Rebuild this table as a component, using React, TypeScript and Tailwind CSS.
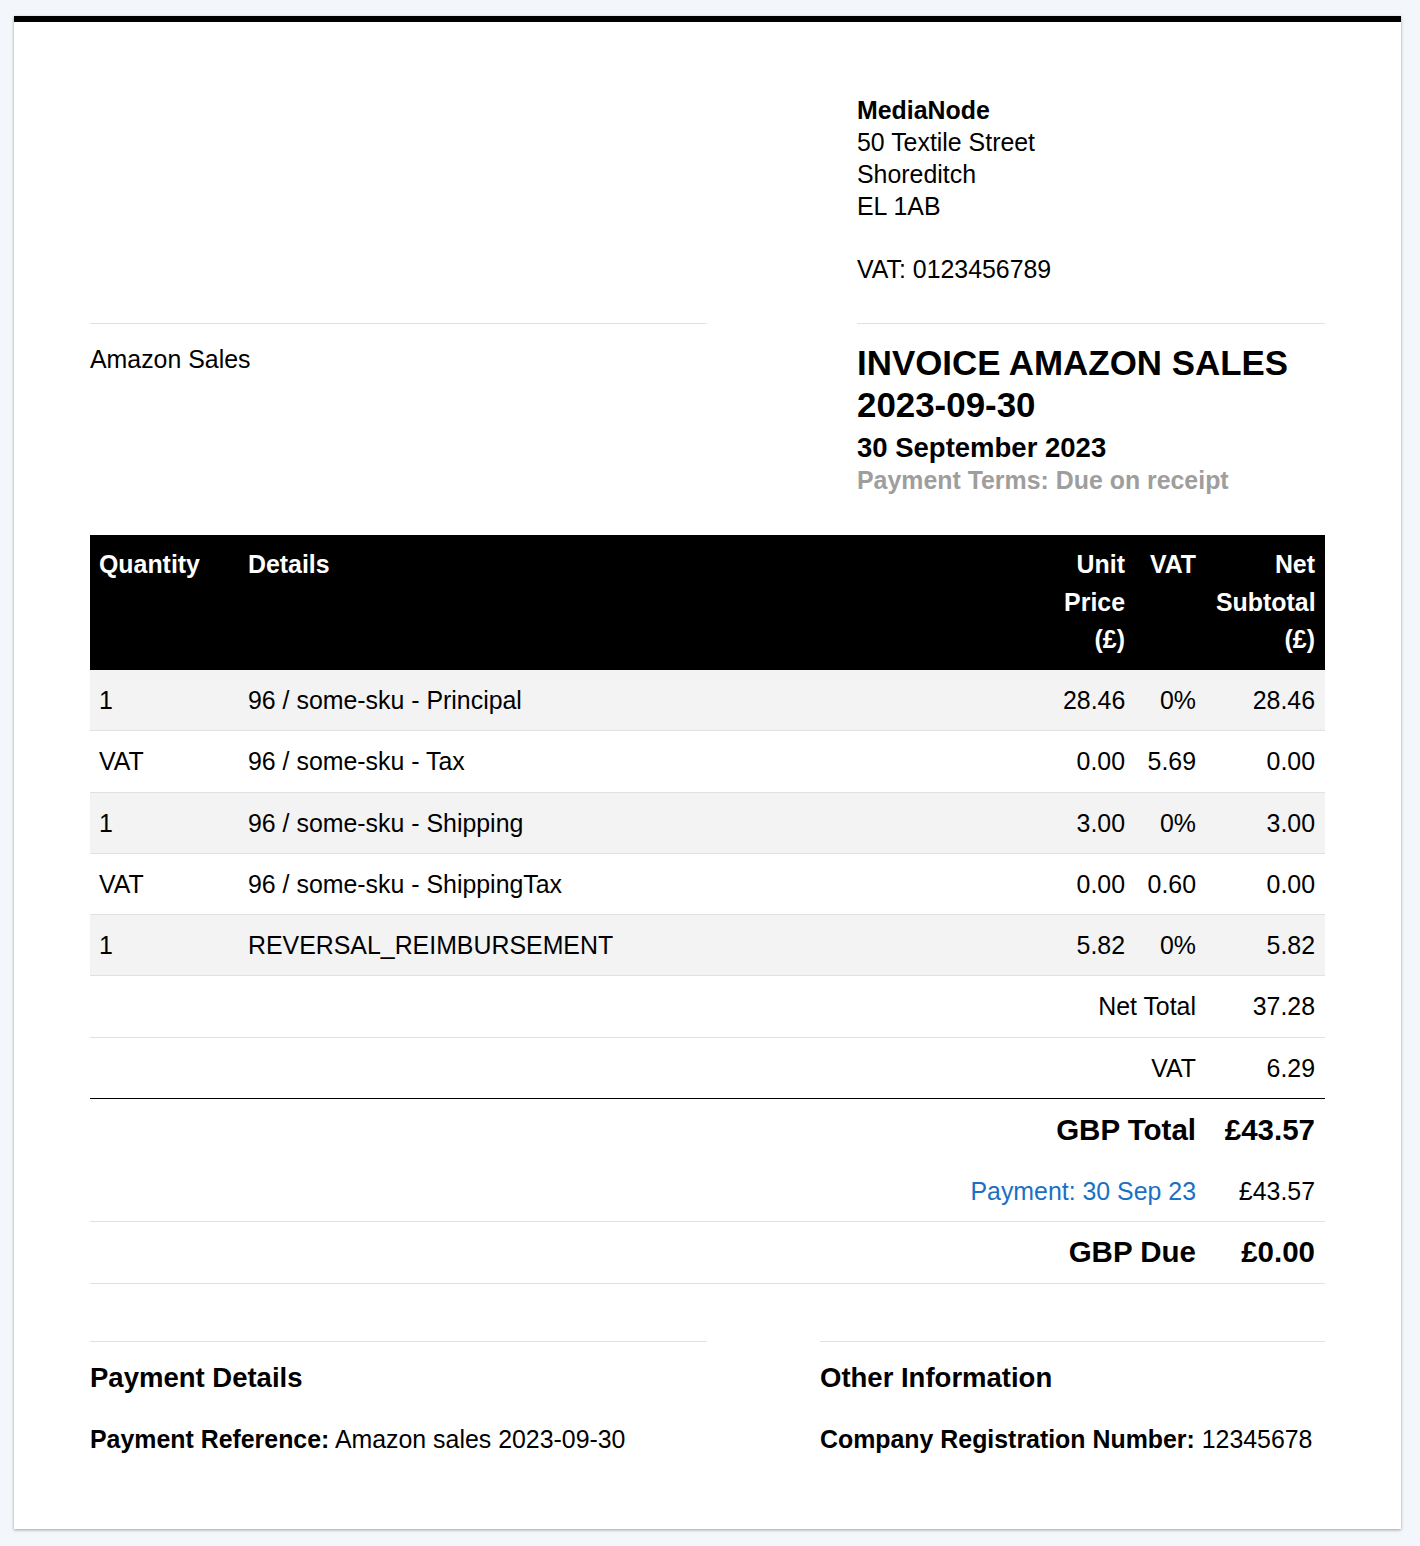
import React from "react";

const rows = [
  { q: "1", d: "96 / some-sku - Principal", u: "28.46", v: "0%", n: "28.46" },
  { q: "VAT", d: "96 / some-sku - Tax", u: "0.00", v: "5.69", n: "0.00" },
  { q: "1", d: "96 / some-sku - Shipping", u: "3.00", v: "0%", n: "3.00" },
  { q: "VAT", d: "96 / some-sku - ShippingTax", u: "0.00", v: "0.60", n: "0.00" },
  { q: "1", d: "REVERSAL_REIMBURSEMENT", u: "5.82", v: "0%", n: "5.82" },
];

const grid = "grid grid-cols-[149px_1fr_82px_71px_119px]";

export default function App() {
  return (
    <div
      className="min-h-[1546px] bg-[#f3f6fa] pt-4 pb-[17px] text-black"
      style={{ fontFamily: '"Liberation Sans", Arial, Helvetica, sans-serif' }}
    >
      <div className="ml-[14px] w-[1387px] border-t-[6px] border-black bg-white px-[76px] pt-[72px] pb-[74px] shadow-[0_1px_3px_rgba(0,0,0,0.35)] text-[24.9px]">
        {/* Company address */}
        <div className="flex">
          <div className="w-[617px]" />
          <div className="ml-auto w-[468px] leading-[32px]">
            <div className="font-bold">MediaNode</div>
            <div>50 Textile Street</div>
            <div>Shoreditch</div>
            <div>EL 1AB</div>
            <div className="mt-[31px]">VAT: 0123456789</div>
          </div>
        </div>

        {/* Bill to + invoice title */}
        <div className="mt-[38px] flex">
          <div className="w-[617px] border-t border-[#dee2e6] pt-[19px] leading-[32px]">
            Amazon Sales
          </div>
          <div className="ml-auto w-[468px] border-t border-[#dee2e6] pt-[18px]">
            <h1 className="text-[34.9px] font-bold leading-[42px]">
              INVOICE AMAZON SALES 2023-09-30
            </h1>
            <div className="mt-[5px] text-[27.5px] font-bold leading-[33px]">30 September 2023</div>
            <div className="text-[24.9px] font-bold leading-[32px] text-[#9e9e9e]">
              Payment Terms: Due on receipt
            </div>
          </div>
        </div>

        {/* Table */}
        <div className="mt-[39px]">
          <div className={`${grid} bg-black font-bold text-white leading-[37.5px]`}>
            <div className="pl-[9px] pr-[10px] pt-[11px] pb-[11.5px]">Quantity</div>
            <div className="pl-[9px] pr-[10px] pt-[11px] pb-[11.5px]">Details</div>
            <div className="px-[10px] pt-[11px] pb-[11.5px] text-right">
              Unit
              <br />
              Price
              <br />
              (£)
            </div>
            <div className="px-[10px] pt-[11px] pb-[11.5px] text-right">VAT</div>
            <div className="px-[10px] pt-[11px] pb-[11.5px] text-right">
              Net
              <br />
              Subtotal
              <br />
              (£)
            </div>
          </div>
          {rows.map((r, i) => (
            <div
              key={i}
              className={`${grid} border-b border-[#dee2e6] leading-[36.25px] ${
                i % 2 === 0 ? "bg-[#f3f3f3]" : "bg-white"
              }`}
            >
              <div className="py-3 pl-[9px] pr-[10px]">{r.q}</div>
              <div className="py-3 pl-[9px] pr-[10px]">{r.d}</div>
              <div className="py-3 px-[10px] text-right">{r.u}</div>
              <div className="py-3 px-[10px] text-right">{r.v}</div>
              <div className="py-3 px-[10px] text-right">{r.n}</div>
            </div>
          ))}

          {/* Totals */}
          <div className={`${grid} border-b border-[#dee2e6] leading-[36.25px]`}>
            <div className="col-span-4 py-3 px-[10px] text-right">Net Total</div>
            <div className="py-3 px-[10px] text-right">37.28</div>
          </div>
          <div className={`${grid} border-b border-black leading-[36.25px]`}>
            <div className="col-span-4 py-3 px-[10px] text-right">VAT</div>
            <div className="py-3 px-[10px] text-right">6.29</div>
          </div>
          <div className={`${grid} text-[29.5px] font-bold leading-[38.25px]`}>
            <div className="col-span-4 py-3 px-[10px] text-right">GBP Total</div>
            <div className="py-3 px-[10px] text-right">£43.57</div>
          </div>
          <div className={`${grid} border-b border-[#dee2e6] leading-[36.25px]`}>
            <div className="col-span-4 py-3 px-[10px] text-right text-[#1a70c4]">
              Payment: 30 Sep 23
            </div>
            <div className="py-3 px-[10px] text-right">£43.57</div>
          </div>
          <div className={`${grid} border-b border-[#dee2e6] text-[29.5px] font-bold leading-[36.25px]`}>
            <div className="col-span-4 py-3 px-[10px] text-right">GBP Due</div>
            <div className="py-3 px-[10px] text-right">£0.00</div>
          </div>
        </div>

        {/* Footer */}
        <div className="mt-[57px] flex">
          <div className="w-[617px] border-t border-[#dee2e6] pt-[19px]">
            <h3 className="text-[27.5px] font-bold leading-[33px]">Payment Details</h3>
            <div className="mt-[29px] leading-[32px]">
              <span className="font-bold">Payment Reference:</span> Amazon sales 2023-09-30
            </div>
          </div>
          <div className="ml-auto w-[505px] border-t border-[#dee2e6] pt-[19px]">
            <h3 className="text-[27.5px] font-bold leading-[33px]">Other Information</h3>
            <div className="mt-[29px] leading-[32px]">
              <span className="font-bold">Company Registration Number:</span> 12345678
            </div>
          </div>
        </div>
      </div>
    </div>
  );
}
